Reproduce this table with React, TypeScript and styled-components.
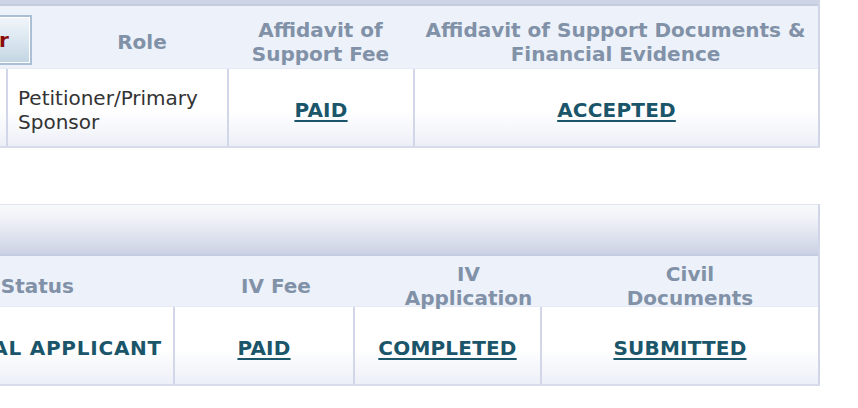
import React from 'react';
import styled, { createGlobalStyle } from 'styled-components';

const Global = createGlobalStyle`
  html, body { margin: 0; padding: 0; background: #ffffff; overflow: hidden; }
  body { font-family: "DejaVu Sans", Verdana, sans-serif; font-size: 20px; }
  #root { width: 858px; height: 408px; overflow: hidden; }
`;

const Page = styled.div`
  width: 820px;
  display: flex;
  flex-direction: column;
  gap: 56px;
`;

const Panel = styled.section<{ $topBorder?: boolean }>`
  border-right: 2px solid #d0d5e7;
  border-bottom: 2px solid #d8dcea;
  border-top: ${(p) => (p.$topBorder ? '1px solid #dfe3ef' : 'none')};
  overflow: hidden;
`;

const TitleBand = styled.div<{ $h: number; $cropped?: boolean }>`
  height: ${(p) => p.$h}px;
  background: ${(p) => (p.$cropped ? '#cdd4e6' : 'linear-gradient(#f8f9fc, #f1f3f9 25%, #ccd2e5)')};
  border-bottom: 2px solid #c4cce0;
`;

const HeaderRow = styled.div<{ $cols: string; $h: number }>`
  display: grid;
  grid-template-columns: ${(p) => p.$cols};
  grid-template-rows: minmax(0, 1fr);
  height: ${(p) => p.$h}px;
  box-sizing: border-box;
  padding-top: 10px;
  background: #edf1fa;
  align-items: center;
`;

const HeaderCell = styled.div<{ $pl?: number }>`
  text-align: center;
  font-weight: bold;
  color: #8191a7;
  line-height: 24px;
  padding-left: ${(p) => p.$pl ?? 0}px;
`;

const ClippedHeaderCell = styled.div<{ $pr: number }>`
  display: flex;
  justify-content: flex-end;
  align-items: center;
  overflow: hidden;
  white-space: nowrap;
  padding-right: ${(p) => p.$pr}px;
  font-weight: bold;
  color: #8191a7;
  line-height: 24px;
`;

const ActionButton = styled.button`
  flex-shrink: 0;
  height: 50px;
  margin-bottom: 4px;
  padding: 0 21px 0 20px;
  font-family: "DejaVu Sans", Verdana, sans-serif;
  font-size: 20px;
  font-weight: bold;
  color: #8b0a0a;
  white-space: nowrap;
  border: 2px solid #abbfd6;
  box-shadow: inset 0 0 0 1px #ffffff;
  background: linear-gradient(#f1f5fa, #dbe7f0 50%, #c2d5e3);
  cursor: pointer;
`;

const DataRow = styled.div<{ $cols: string }>`
  display: grid;
  grid-template-columns: ${(p) => p.$cols};
  height: 77px;
  border-top: 1px solid #e6eaf4;
  background: linear-gradient(#ffffff, #ffffff 55%, #eceff7);
`;

const DataCell = styled.div<{ $align?: 'left' | 'center' | 'right'; $divider?: boolean; $pl?: number; $pr?: number }>`
  display: flex;
  align-items: center;
  justify-content: ${(p) => (p.$align === 'left' ? 'flex-start' : p.$align === 'right' ? 'flex-end' : 'center')};
  text-align: ${(p) => p.$align ?? 'center'};
  border-left: ${(p) => (p.$divider ? '2px solid #d1d6e8' : 'none')};
  padding: 5px ${(p) => p.$pr ?? 0}px 0 ${(p) => p.$pl ?? 0}px;
  overflow: hidden;
  line-height: 24px;
`;

const PlainText = styled.span`
  color: #333333;
`;

const StrongText = styled.span`
  color: #1a5569;
  font-weight: bold;
  letter-spacing: 0.75px;
  white-space: nowrap;
`;

const StatusLink = styled.a`
  color: #1a5569;
  font-weight: bold;
  text-decoration: underline;
  text-decoration-thickness: 2px;
  text-underline-offset: 3px;
  letter-spacing: 0.2px;
  white-space: nowrap;
`;

export default function App() {
  return (
    <>
      <Global />
      <Page>
        <Panel>
          <TitleBand $h={4} $cropped />
          <HeaderRow $cols="56px 172px 185px 1fr" $h={62}>
            <ClippedHeaderCell $pr={24}>
              <ActionButton type="button">Filter</ActionButton>
            </ClippedHeaderCell>
            <HeaderCell>Role</HeaderCell>
            <HeaderCell>
              Affidavit of
              <br />
              Support Fee
            </HeaderCell>
            <HeaderCell>
              Affidavit of Support Documents &amp;
              <br />
              Financial Evidence
            </HeaderCell>
          </HeaderRow>
          <DataRow $cols="6px 221px 186px 1fr">
            <DataCell />
            <DataCell $align="left" $divider $pl={10}>
              <PlainText>
                Petitioner/Primary
                <br />
                Sponsor
              </PlainText>
            </DataCell>
            <DataCell $divider>
              <StatusLink href="#">PAID</StatusLink>
            </DataCell>
            <DataCell $divider>
              <StatusLink href="#">ACCEPTED</StatusLink>
            </DataCell>
          </DataRow>
        </Panel>

        <Panel $topBorder>
          <TitleBand $h={49} />
          <HeaderRow $cols="173px 180px 187px 1fr" $h={50}>
            <ClippedHeaderCell $pr={99}>Applicant Status</ClippedHeaderCell>
            <HeaderCell $pl={26}>IV Fee</HeaderCell>
            <HeaderCell $pl={44}>
              IV
              <br />
              Application
            </HeaderCell>
            <HeaderCell $pl={22}>
              Civil
              <br />
              Documents
            </HeaderCell>
          </HeaderRow>
          <DataRow $cols="173px 180px 187px 1fr">
            <DataCell $align="right" $pr={11}>
              <StrongText>PRINCIPAL APPLICANT</StrongText>
            </DataCell>
            <DataCell $divider>
              <StatusLink href="#">PAID</StatusLink>
            </DataCell>
            <DataCell $divider>
              <StatusLink href="#">COMPLETED</StatusLink>
            </DataCell>
            <DataCell $divider>
              <StatusLink href="#">SUBMITTED</StatusLink>
            </DataCell>
          </DataRow>
        </Panel>
      </Page>
    </>
  );
}
